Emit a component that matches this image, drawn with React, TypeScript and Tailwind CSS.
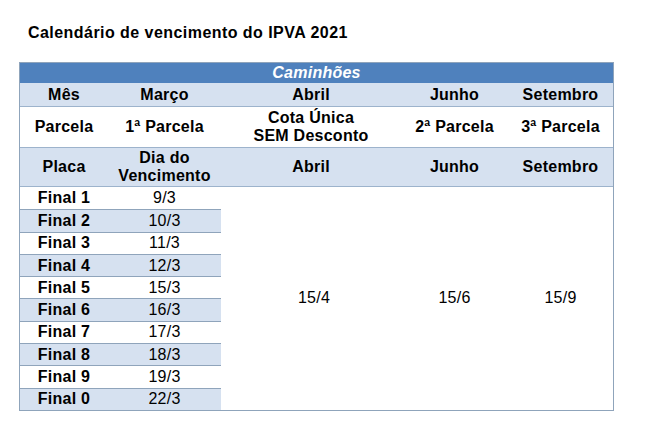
const finals = [
  { placa: 'Final 1', dia: '9/3' },
  { placa: 'Final 2', dia: '10/3' },
  { placa: 'Final 3', dia: '11/3' },
  { placa: 'Final 4', dia: '12/3' },
  { placa: 'Final 5', dia: '15/3' },
  { placa: 'Final 6', dia: '16/3' },
  { placa: 'Final 7', dia: '17/3' },
  { placa: 'Final 8', dia: '18/3' },
  { placa: 'Final 9', dia: '19/3' },
  { placa: 'Final 0', dia: '22/3' },
];

export default function App() {
  return (
    <div
      className="w-[650px] h-[432px] bg-white text-black pt-[24px] pl-[19px]"
      style={{ fontFamily: '"Liberation Sans", Arial, sans-serif' }}
    >
      {/* Title */}
      <h1 className="pl-[9px] text-[16px] font-bold tracking-[0.45px] leading-[18px]">
        Calendário de vencimento do IPVA 2021
      </h1>

      {/* Table */}
      <div className="mt-[20px] w-[595px] border border-[#8fa4bb] grid grid-cols-[88px_113px_180px_107px_105px] grid-rows-[20px_24px_40px_40px_repeat(10,22.3px)] text-[16px] tracking-[0.25px] leading-[18px]">
        <div className="col-span-5 bg-[#4f81bd] text-white italic font-bold flex items-center justify-center">
          Caminhões
        </div>

        {['Mês', 'Março', 'Abril', 'Junho', 'Setembro'].map((t) => (
          <div key={t} className="bg-[#d6e1f0] font-bold flex items-center justify-center border-b border-[#9db3cc]">
            {t}
          </div>
        ))}

        <div className="font-bold flex items-center justify-center">Parcela</div>
        <div className="font-bold flex items-center justify-center">1ª Parcela</div>
        <div className="font-bold flex items-center justify-center text-center">
          Cota Única
          <br />
          SEM Desconto
        </div>
        <div className="font-bold flex items-center justify-center">2ª Parcela</div>
        <div className="font-bold flex items-center justify-center">3ª Parcela</div>

        {['Placa', 'Dia do\nVencimento', 'Abril', 'Junho', 'Setembro'].map((t) => (
          <div
            key={t}
            className="bg-[#d6e1f0] font-bold flex items-center justify-center text-center whitespace-pre-line border-y border-[#9db3cc]"
          >
            {t}
          </div>
        ))}

        {finals.map((f, i) => (
          <div key={f.placa} className="contents">
            <div
              className={`font-bold flex items-center justify-center ${i % 2 ? 'bg-[#d6e1f0]' : 'bg-white'} ${i > 0 ? 'border-t border-[#8fa4bb]' : ''}`}
              style={{ gridColumn: 1, gridRow: i + 5 }}
            >
              {f.placa}
            </div>
            <div
              className={`flex items-center justify-center ${i % 2 ? 'bg-[#d6e1f0]' : 'bg-white'} ${i > 0 ? 'border-t border-[#8fa4bb]' : ''}`}
              style={{ gridColumn: 2, gridRow: i + 5 }}
            >
              {f.dia}
            </div>
          </div>
        ))}

        <div className="col-start-3 row-start-5 row-span-10 flex items-center justify-center pl-[6px]">15/4</div>
        <div className="col-start-4 row-start-5 row-span-10 flex items-center justify-center">15/6</div>
        <div className="col-start-5 row-start-5 row-span-10 flex items-center justify-center">15/9</div>
      </div>
    </div>
  );
}
